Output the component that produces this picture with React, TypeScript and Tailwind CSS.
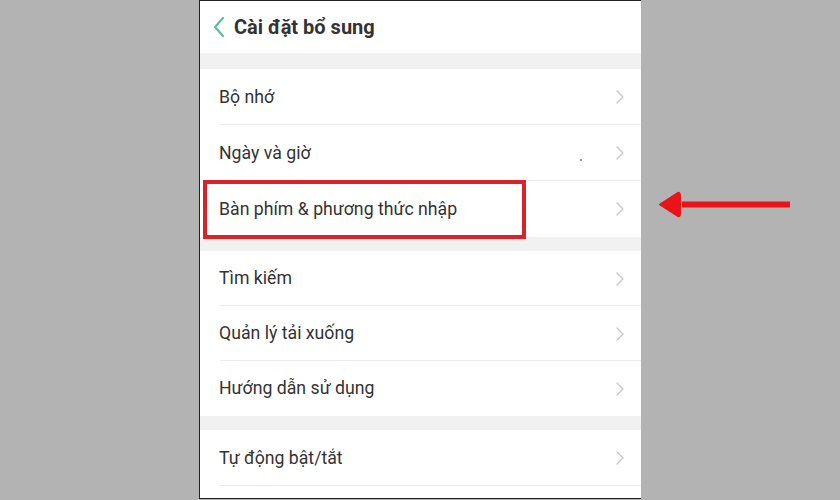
import React from 'react';

const groups: string[][] = [
  ['Bộ nhớ', 'Ngày và giờ', 'Bàn phím & phương thức nhập'],
  ['Tìm kiếm', 'Quản lý tải xuống', 'Hướng dẫn sử dụng'],
  ['Tự động bật/tắt'],
];

const Chevron = () => (
  <svg width="10" height="16" viewBox="0 0 10 16" fill="none">
    <path d="M2 2l6 6-6 6" stroke="#c9c9c9" strokeWidth="1.4" strokeLinecap="round" strokeLinejoin="round" />
  </svg>
);

const Row = ({ label, last, tall }: { label: string; last: boolean; tall: boolean }) => (
  <div
    className={`relative flex items-center justify-between pl-[19px] pr-[16px] ${tall ? 'h-[56px]' : 'h-[55px]'}`}
  >
    <span className="text-[17.7px] text-[#333333]">{label}</span>
    <Chevron />
    {!last && <div className="absolute bottom-0 left-[20px] right-0 h-px bg-[#ececec]" />}
  </div>
);

export default function App() {
  return (
    <div
      className="flex h-[500px] w-[840px] bg-[#b3b3b3] pl-[199px]"
      style={{ fontFamily: 'Roboto, "Noto Sans", sans-serif' }}
    >
      <div className="relative flex h-[499px] w-[442px] flex-col border-y border-l border-[#222] bg-white">
        <div className="flex h-[52px] items-center gap-[6px] pl-[12px]">
          <svg width="16" height="24" viewBox="0 0 16 24" fill="none">
            <path d="M11 3L3 12l8 9" stroke="#5cbf9c" strokeWidth="2.2" strokeLinecap="round" strokeLinejoin="round" />
          </svg>
          <span className="text-[20px] font-bold text-[#333333]">Cài đặt bổ sung</span>
        </div>
        {groups.map((g, gi) => (
          <div key={gi}>
            <div className={gi === 0 ? 'h-[16px] bg-[#f1f1f1]' : 'h-[14px] bg-[#f1f1f1]'} />
            {g.map((label, i) => (
              <Row key={label} label={label} tall={gi !== 1} last={gi !== 2 && i === g.length - 1} />
            ))}
          </div>
        ))}
        <div className="flex-1" />
        <div className="absolute left-[3px] top-[179px] h-[59px] w-[323px] border-[4px] border-[#d8232a]" />
        <div className="absolute left-[380px] top-[158px] h-[1.5px] w-[1.5px] rounded-full bg-[#777]" />
      </div>
      <div className="relative w-0">
        <svg className="absolute left-[17px] top-[190px]" width="135" height="30" viewBox="0 0 135 30">
          <path d="M24 11.5H132v6H24z" fill="#e8141a" />
          <path d="M2 14.5L19 3.5q3-2 3 2v18q0 4-3 2z" fill="#e8141a" stroke="#e8141a" strokeLinejoin="round" strokeWidth="2" />
        </svg>
      </div>
    </div>
  );
}
